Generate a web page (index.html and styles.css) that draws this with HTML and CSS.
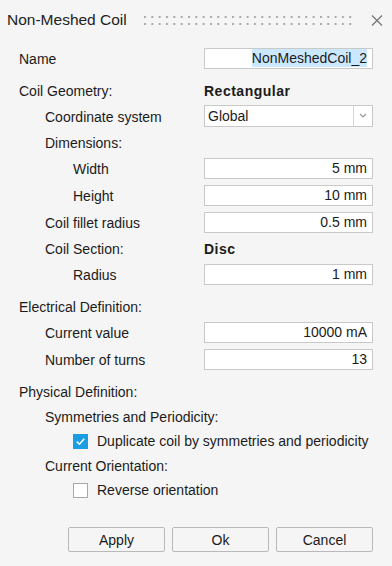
FILE: index.html
```
<!DOCTYPE html>
<html lang="en">
<head>
    <meta charset="UTF-8">
    <meta name="viewport" content="width=device-width, initial-scale=1.0">
    <title>Non-Meshed Coil</title>
    <link rel="stylesheet" href="styles.css">
</head>
<body>
    <div class="dialog">
        <div class="titlebar">
            <span class="title">Non-Meshed Coil</span>
            <svg class="grip" width="212" height="9" viewBox="0 0 212 9">
                <defs>
                    <pattern id="dots" width="7.33" height="7" patternUnits="userSpaceOnUse">
                        <rect x="0" y="0" width="2" height="2" fill="#a9a9a9"/>
                    </pattern>
                </defs>
                <rect x="0" y="0" width="212" height="9" fill="url(#dots)"/>
            </svg>
            <svg class="close" width="12" height="11" viewBox="0 0 12 11">
                <path d="M1 0.5 L11 10.5 M11 0.5 L1 10.5" stroke="#7a7a7a" stroke-width="1.4" fill="none"/>
            </svg>
        </div>

        <div class="form">
            <div class="row field-row">
                <span class="label">Name</span>
                <div class="field"><span class="selected">NonMeshedCoil_2</span></div>
            </div>

            <div class="row section">
                <span class="label">Coil Geometry:</span>
                <span class="value">Rectangular</span>
            </div>
            <div class="row field-row">
                <span class="label lvl1">Coordinate system</span>
                <div class="select">
                    <span class="select-text">Global</span>
                    <span class="select-arrow">
                        <svg width="8" height="5" viewBox="0 0 8 5">
                            <path d="M1 1 L4 4 L7 1" stroke="#9a9a9a" stroke-width="1.2" fill="none"/>
                        </svg>
                    </span>
                </div>
            </div>
            <div class="row">
                <span class="label lvl1">Dimensions:</span>
            </div>
            <div class="row field-row">
                <span class="label lvl2">Width</span>
                <div class="field">5 mm</div>
            </div>
            <div class="row field-row">
                <span class="label lvl2">Height</span>
                <div class="field">10 mm</div>
            </div>
            <div class="row field-row">
                <span class="label lvl1">Coil fillet radius</span>
                <div class="field">0.5 mm</div>
            </div>
            <div class="row">
                <span class="label lvl1">Coil Section:</span>
                <span class="value">Disc</span>
            </div>
            <div class="row field-row">
                <span class="label lvl2">Radius</span>
                <div class="field">1 mm</div>
            </div>

            <div class="row section">
                <span class="label">Electrical Definition:</span>
            </div>
            <div class="row field-row">
                <span class="label lvl1">Current value</span>
                <div class="field">10000 mA</div>
            </div>
            <div class="row field-row">
                <span class="label lvl1">Number of turns</span>
                <div class="field">13</div>
            </div>

            <div class="row section">
                <span class="label">Physical Definition:</span>
            </div>
            <div class="row">
                <span class="label lvl1">Symmetries and Periodicity:</span>
            </div>
            <div class="row check-row">
                <span class="checkbox checked">
                    <svg width="15" height="15" viewBox="0 0 15 15">
                        <path d="M3.8 7.6 L6.4 10.2 L11.2 4.8" stroke="#fff" stroke-width="1.6" fill="none"/>
                    </svg>
                </span>
                <span class="check-label">Duplicate coil by symmetries and periodicity</span>
            </div>
            <div class="row">
                <span class="label lvl1">Current Orientation:</span>
            </div>
            <div class="row check-row">
                <span class="checkbox"></span>
                <span class="check-label">Reverse orientation</span>
            </div>
        </div>

        <div class="buttons">
            <button>Apply</button>
            <button>Ok</button>
            <button>Cancel</button>
        </div>
    </div>
</body>
</html>
```

FILE: styles.css
```
body {
    margin: 0;
    padding: 0;
    background: #f5f5f5;
    font-family: "Liberation Sans", Arial, sans-serif;
    font-size: 14px;
    color: #1b1b1b;
}

.dialog {
    width: 392px;
    height: 566px;
}

.titlebar {
    height: 40px;
    display: flex;
    align-items: center;
    padding: 0 9px 0 7px;
}

.title {
    font-size: 15.5px;
    color: #222;
}

.grip {
    margin-left: auto;
    margin-right: 15px;
    margin-top: 1px;
}

.close {
    margin-top: 1px;
}

.form {
    padding: 5px 19px 0 19px;
}

.row {
    height: 25px;
    display: grid;
    grid-template-columns: 1fr 169px;
    align-items: center;
}

.label {
    white-space: nowrap;
}

.field-row {
    height: 27px;
}

.section {
    margin-top: 6px;
}

.lvl1 {
    padding-left: 26px;
}

.lvl2 {
    padding-left: 54px;
}

.value {
    font-weight: bold;
    letter-spacing: 0.5px;
}

.field {
    height: 21px;
    box-sizing: border-box;
    background: #fff;
    border: 1px solid #c9c9c9;
    text-align: right;
    padding: 0 5px;
    line-height: 19px;
}

.selected {
    background: #cce8ff;
    padding: 1px 0;
}

.select {
    height: 22px;
    box-sizing: border-box;
    background: #fff;
    border: 1px solid #c9c9c9;
    display: flex;
    margin-top: -2px;
}

.select-text {
    flex: 1;
    padding-left: 3px;
    line-height: 20px;
}

.select-arrow {
    width: 18px;
    border-left: 1px solid #d6d6d6;
    display: flex;
    align-items: center;
    justify-content: center;
}

.check-row {
    height: 24px;
    display: flex;
    align-items: center;
    padding-left: 54px;
}

.check-label {
    white-space: nowrap;
}

.checkbox {
    width: 15px;
    height: 15px;
    box-sizing: border-box;
    border: 1px solid #a8a8a8;
    background: #fff;
    margin-right: 9px;
    display: block;
}

.checkbox.checked {
    border: none;
    background: #1a9de2;
}

.checkbox svg {
    display: block;
}

.buttons {
    display: flex;
    justify-content: flex-end;
    gap: 7px;
    padding: 0 19px;
    margin-top: 25px;
}

.buttons button {
    width: 97px;
    height: 25px;
    background: #f5f5f5;
    border: 1px solid #b9b9b9;
    border-radius: 2px;
    font-family: "Liberation Sans", Arial, sans-serif;
    font-size: 14px;
    color: #1b1b1b;
    padding: 0;
}
```
